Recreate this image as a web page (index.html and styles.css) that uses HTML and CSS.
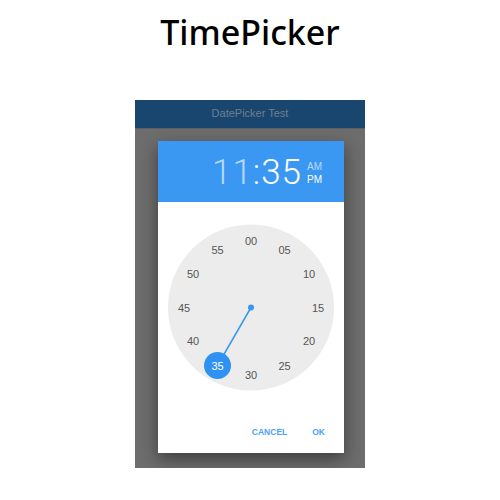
FILE: index.html
```html
<!DOCTYPE html>
<html lang="en">

<head>
    <meta charset="UTF-8">
    <meta name="viewport" content="width=device-width, initial-scale=1.0">
    <title>TimePicker</title>
    <link rel="stylesheet" href="styles.css">
</head>

<body>
    <h1 class="title">TimePicker</h1>

    <div class="phone">
        <div class="navbar">DatePicker Test</div>
        <div class="dim">
            <div class="dialog">
                <div class="dialog-head">
                    <div class="time"><span class="faded">11</span>:35</div>
                    <div class="ampm">
                        <span class="faded">AM</span>
                        <span>PM</span>
                    </div>
                </div>
                <div class="dialog-body">
                    <svg class="clock" width="185" height="210" viewBox="0 0 185 210">
                        <circle cx="93" cy="105.5" r="83" fill="#ececec" />
                        <g class="nums">
                            <text x="93" y="38.5">00</text>
                            <text x="126.5" y="47.5">05</text>
                            <text x="151" y="72">10</text>
                            <text x="160" y="105.5">15</text>
                            <text x="151" y="139">20</text>
                            <text x="126.5" y="163.5">25</text>
                            <text x="93" y="172.5">30</text>
                            <text x="35" y="139">40</text>
                            <text x="26" y="105.5">45</text>
                            <text x="35" y="72">50</text>
                            <text x="59.5" y="47.5">55</text>
                        </g>
                        <line x1="93" y1="105.5" x2="59.5" y2="163.5" stroke="#3a96f0" stroke-width="1.5" />
                        <circle cx="93" cy="105.5" r="3" fill="#3a96f0" />
                        <circle cx="59.5" cy="163.5" r="13.5" fill="#2f92f0" />
                        <text class="sel" x="59.5" y="163.5">35</text>
                    </svg>
                </div>
                <div class="actions">
                    <span class="btn">CANCEL</span>
                    <span class="btn">OK</span>
                </div>
            </div>
        </div>
    </div>
</body>

</html>
```

FILE: styles.css
```css
html,
body {
    margin: 0;
    background-color: #ffffff;
}

body {
    font-family: "Liberation Sans", Arial, sans-serif;
}

.title {
    margin: 0;
    padding-top: 12px;
    height: 88px;
    box-sizing: border-box;
    font-family: "Noto Sans", sans-serif;
    font-weight: 500;
    font-size: 34px;
    line-height: 40px;
    text-align: center;
    color: #000;
}

.phone {
    width: 230px;
    height: 368px;
    margin: 12px auto 0;
    display: flex;
    flex-direction: column;
    background-color: #6d6d6d;
}

.navbar {
    height: 28px;
    flex-shrink: 0;
    background-color: #19466f;
    color: #6e7f90;
    font-size: 11px;
    line-height: 27px;
    text-align: center;
    border-bottom: 1px solid #5a6068;
}

.dim {
    flex: 1;
    padding: 12px 21px 0 23px;
}

.dialog {
    width: 186px;
    height: 312px;
    background-color: #ffffff;
    box-shadow: 0 6px 16px rgba(0, 0, 0, 0.45);
    display: flex;
    flex-direction: column;
}

.dialog-head {
    height: 61px;
    background-color: #3a97f2;
    display: flex;
    align-items: center;
    justify-content: flex-end;
    padding-right: 22px;
    gap: 5px;
    color: #ffffff;
}

.time {
    font-family: Roboto, "Liberation Sans", sans-serif;
    font-weight: 300;
    font-size: 35px;
    letter-spacing: 1px;
    line-height: 40px;
    margin-top: 2px;
}

.faded {
    color: rgba(255, 255, 255, 0.65);
}

.ampm {
    display: flex;
    flex-direction: column;
    font-size: 10px;
    line-height: 13px;
    margin-top: 2px;
}

.dialog-body {
    height: 210px;
}

.clock {
    display: block;
}

.nums text,
.sel {
    font-family: "Liberation Sans", sans-serif;
    font-size: 11px;
    fill: #555555;
    text-anchor: middle;
    dominant-baseline: central;
}

.sel {
    fill: #ffffff;
}

.actions {
    flex: 1;
    display: flex;
    justify-content: flex-end;
    align-items: center;
    gap: 25px;
    padding-right: 19px;
    padding-bottom: 1px;
}

.btn {
    font-size: 8.5px;
    font-weight: bold;
    color: #4aa3f5;
}
```
